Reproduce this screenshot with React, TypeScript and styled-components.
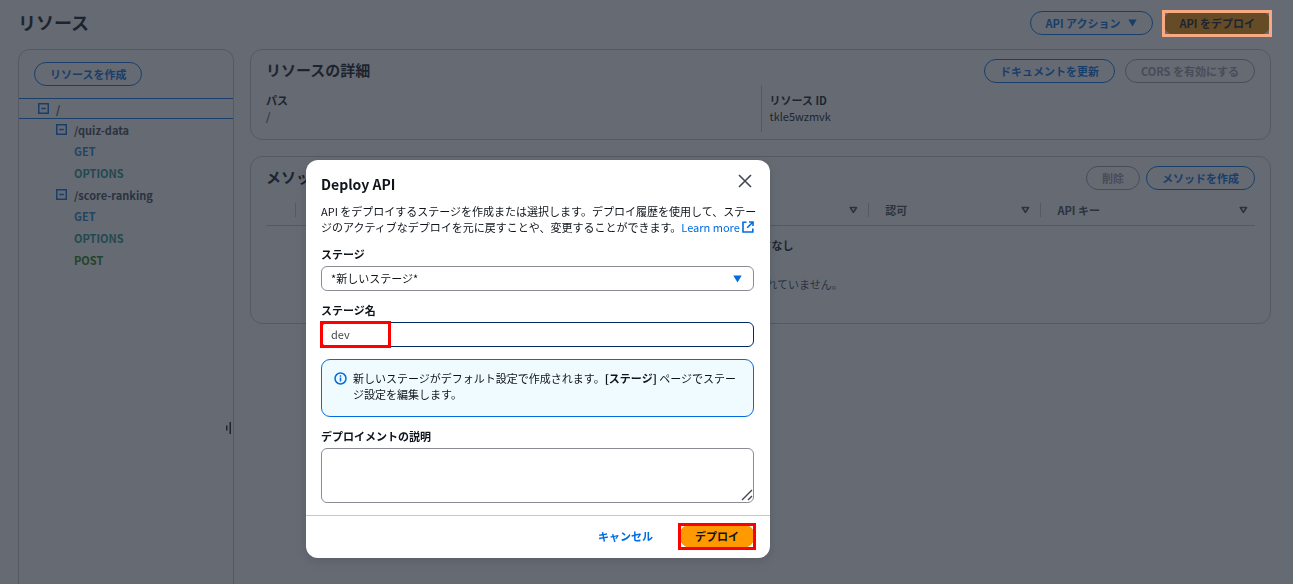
import React, { useState } from "react";
import styled, { createGlobalStyle, css } from "styled-components";

const color = {
  text: "#0f141a",
  muted: "#424650",
  link: "#006ce0",
  border: "#c6c6cd",
  field: "#8c8c94",
  disabled: "#9c9ca6",
  orange: "#ff9900",
};

const GlobalStyle = createGlobalStyle`
  *, *::before, *::after { box-sizing: border-box; }
  body { margin: 0; background: #fff; overflow: hidden; }
  body, button, input, select, textarea {
    font-family: "Noto Sans CJK JP", "Noto Sans", sans-serif;
    font-size: 11px;
    line-height: 16px;
    color: ${color.text};
  }
  h1, h2, p, ul, dl, dd { margin: 0; padding: 0; }
  ul { list-style: none; }
`;

const Page = styled.main`
  min-height: 100vh;
  display: flex;
  flex-direction: column;
  padding: 0 22px 0 18px;
`;

const PageHeader = styled.header`
  display: flex;
  align-items: center;
  justify-content: space-between;
  padding: 11px 0 14px;
`;

const PageTitle = styled.h1`
  font-size: 18px;
  line-height: 22px;
  padding-bottom: 2px;
`;

const Actions = styled.div<{ $gap: number }>`
  display: flex;
  align-items: center;
  gap: ${(p) => p.$gap}px;
`;

type Variant = "normal" | "primary" | "link";

const variants = {
  normal: css`
    border-color: ${color.link};
    color: ${color.link};
    background: #fff;
  `,
  primary: css`
    border-color: ${color.orange};
    color: ${color.text};
    background: ${color.orange};
  `,
  link: css`
    border-color: transparent;
    color: ${color.link};
    background: transparent;
  `,
};

const Button = styled.button<{ $variant?: Variant }>`
  display: inline-flex;
  align-items: center;
  gap: 8px;
  height: 24px;
  padding: 0 15px;
  border: 1px solid;
  border-radius: 12px;
  font-weight: 700;
  white-space: nowrap;
  cursor: pointer;
  ${(p) => variants[p.$variant ?? "normal"]}
  &:disabled {
    border-color: ${color.disabled};
    color: ${color.disabled};
    cursor: default;
  }
`;

const Marked = styled.span<{ $color: string }>`
  position: relative;
  display: inline-flex;
  &::after {
    content: "";
    position: absolute;
    inset: -1px -1px -2px;
    border: 3px solid ${(p) => p.$color};
    z-index: 20;
    pointer-events: none;
  }
`;

const Columns = styled.div`
  flex: 1;
  display: flex;
  gap: 16px;
`;

const Sidebar = styled.aside`
  position: relative;
  width: 216px;
  flex: none;
  border: 1px solid ${color.border};
  border-bottom: 0;
  border-radius: 12px 12px 0 0;
`;

const SidebarTop = styled.div`
  padding: 12px 15px;
  display: flex;
`;

const TreeRow = styled.div<{ $level: number; $selected?: boolean; $method?: boolean }>`
  display: flex;
  align-items: center;
  gap: 7px;
  height: ${(p) => (p.$method ? 22 : 21)}px;
  padding-left: ${(p) => 19 + p.$level * 18}px;
  font-weight: 700;
  color: ${color.muted};
  ${(p) =>
    p.$selected &&
    css`
      border-top: 1px solid ${color.link};
      border-bottom: 1px solid ${color.link};
    `}
`;

const Toggle = styled.button`
  display: flex;
  padding: 0;
  border: 0;
  background: none;
  color: ${color.link};
`;

const methodColor: Record<string, string> = {
  GET: "#1f83c4",
  OPTIONS: "#1c8f85",
  POST: "#1d8102",
};

const MethodLink = styled.a<{ $method: string }>`
  color: ${(p) => methodColor[p.$method]};
  text-decoration: none;
`;

const ResizeHandle = styled.svg`
  position: absolute;
  right: 1px;
  top: calc(50vh + 80px);
`;

const Content = styled.div`
  flex: 1;
  min-width: 0;
  display: flex;
  flex-direction: column;
  gap: 16px;
`;

const Card = styled.section`
  border: 1px solid ${color.border};
  border-radius: 12px;
  padding: 9px 15px 7px;
`;

const CardHeader = styled.div`
  display: flex;
  align-items: center;
  justify-content: space-between;
`;

const CardTitle = styled.h2`
  font-size: 15px;
  line-height: 22px;
  padding-bottom: 2px;
`;

const Details = styled.dl`
  display: grid;
  grid-template-columns: 1fr 1fr;
  margin-top: 2px;
`;

const Detail = styled.div<{ $divided?: boolean }>`
  padding: 7px 0 8px;
  ${(p) =>
    p.$divided &&
    css`
      border-left: 1px solid ${color.border};
      padding-left: 8px;
    `}
`;

const DetailName = styled.dt`
  font-weight: 700;
`;

const Table = styled.table`
  width: 100%;
  margin-top: 5px;
  border-collapse: collapse;
  table-layout: fixed;
`;

const HeadCell = styled.th`
  height: 30px;
  padding: 0;
  border-bottom: 1px solid ${color.border};
  color: ${color.muted};
  text-align: left;
`;

const HeadInner = styled.div<{ $last?: boolean }>`
  display: flex;
  align-items: center;
  justify-content: space-between;
  height: 14px;
  padding: 0 10px 0 16px;
  border-right: ${(p) => (p.$last ? "0" : `1px solid ${color.border}`)};
  ${(p) => p.$last && "padding-right: 7px;"}
`;

const EmptyCell = styled.td`
  padding: 11px 0 19px;
  text-align: center;
`;

const EmptyTitle = styled.p`
  font-weight: 700;
`;

const EmptyText = styled.p`
  padding: 23px 0 5px;
  color: ${color.muted};
`;

const Overlay = styled.div`
  position: fixed;
  inset: 0;
  z-index: 10;
  display: flex;
  justify-content: center;
  align-items: flex-start;
  padding: 160px 217px 0 0;
  background: rgba(35, 43, 55, 0.7);
`;

const Dialog = styled.div`
  width: 464px;
  background: #fff;
  border-radius: 12px;
  box-shadow: 0 3px 12px rgba(0, 7, 22, 0.12);
`;

const DialogHeader = styled.div`
  display: flex;
  justify-content: space-between;
  padding: 13px 18px 8px 15px;
`;

const DialogTitle = styled.h2`
  font-size: 14px;
  line-height: 22px;
`;

const CloseButton = styled.button`
  display: flex;
  padding: 0;
  border: 0;
  margin-top: 1px;
  height: 14px;
  background: none;
  color: ${color.muted};
`;

const Description = styled.p`
  padding: 0 8px 0 15px;
`;

const Link = styled.a`
  display: inline-flex;
  align-items: center;
  gap: 2px;
  color: ${color.link};
  text-decoration: none;
`;

const Form = styled.div`
  display: flex;
  flex-direction: column;
  gap: 11px;
  padding: 11px 16px 12px 15px;
`;

const Field = styled.div`
  display: flex;
  flex-direction: column;
  gap: 4px;
`;

const Label = styled.label`
  font-weight: 700;
`;

const Control = styled.div`
  position: relative;
  display: flex;
`;

const box = css`
  width: 100%;
  padding: 0 9px 1px;
  border: 1px solid ${color.field};
  border-radius: 6px;
  background: #fff;
  outline: 0;
  color: ${color.text};
`;

const Select = styled.select`
  ${box}
  height: 25px;
  appearance: none;
`;

const SelectArrow = styled.svg`
  position: absolute;
  right: 12px;
  top: 9px;
  pointer-events: none;
`;

const Input = styled.input`
  ${box}
  height: 25px;
  border-color: #002b66;
  color: ${color.muted};
`;

const InputMark = styled.span`
  position: absolute;
  left: -1px;
  top: -1px;
  bottom: -1px;
  width: 71px;
  border: 3px solid #ff0000;
  pointer-events: none;
`;

const TextArea = styled.textarea`
  ${box}
  height: 55px;
  resize: none;
`;

const Grip = styled.svg`
  position: absolute;
  right: 1px;
  bottom: 2px;
  pointer-events: none;
`;

const Info = styled.div`
  display: flex;
  gap: 6px;
  min-height: 58px;
  margin-top: 1px;
  padding: 10px 12px;
  border: 1px solid ${color.link};
  border-radius: 9px;
  background: #f0fbff;
  svg {
    flex: none;
    margin-top: 2px;
  }
`;

const DialogFooter = styled.div`
  display: flex;
  justify-content: flex-end;
  align-items: center;
  gap: 10px;
  padding: 8px 15px 10px;
  border-top: 1px solid ${color.border};
`;

const CollapseIcon = () => (
  <svg width="11" height="11" viewBox="0 0 11 11" fill="none" stroke="currentColor" aria-hidden="true">
    <rect x="0.75" y="0.75" width="9.5" height="9.5" strokeWidth="1.5" />
    <path d="M3.2 5.5h4.6" strokeWidth="1.5" />
  </svg>
);

const SortIcon = () => (
  <svg width="9" height="8" viewBox="0 0 9 8" fill="none" stroke="currentColor" strokeWidth="1.7" aria-hidden="true">
    <path d="M1.3 1.5h6.2L4.4 6.4z" strokeLinejoin="round" />
  </svg>
);

const CaretIcon = () => (
  <svg width="9" height="8" viewBox="0 0 9 8" fill="currentColor" aria-hidden="true">
    <path d="M0.3 0.5h8.4L4.5 7.5z" />
  </svg>
);

type Resource = { path: string; methods: string[] };

const resources: Resource[] = [
  { path: "/quiz-data", methods: ["GET", "OPTIONS"] },
  { path: "/score-ranking", methods: ["GET", "OPTIONS", "POST"] },
];

const columns = ["メソッドタイプ", "統合タイプ", "認可", "API キー"];

function ResourceTree() {
  return (
    <ul>
      <li>
        <TreeRow $level={0} $selected>
          <Toggle aria-label="折りたたむ"><CollapseIcon /></Toggle>/
        </TreeRow>
        <ul>
          {resources.map((r) => (
            <li key={r.path}>
              <TreeRow $level={1}>
                <Toggle aria-label="折りたたむ"><CollapseIcon /></Toggle>
                {r.path}
              </TreeRow>
              <ul>
                {r.methods.map((m) => (
                  <li key={m}>
                    <TreeRow $level={2} $method>
                      <MethodLink href="#" $method={m}>{m}</MethodLink>
                    </TreeRow>
                  </li>
                ))}
              </ul>
            </li>
          ))}
        </ul>
      </li>
    </ul>
  );
}

function DeployDialog() {
  const [name, setName] = useState("dev");
  const [note, setNote] = useState("");
  return (
    <Overlay>
      <Dialog role="dialog" aria-modal="true" aria-labelledby="deploy-title">
        <DialogHeader>
          <DialogTitle id="deploy-title">Deploy API</DialogTitle>
          <CloseButton aria-label="閉じる">
            <svg width="14" height="14" viewBox="0 0 14 14" fill="none" stroke="currentColor" strokeWidth="1.6">
              <path d="M1 1l12 12M13 1L1 13" />
            </svg>
          </CloseButton>
        </DialogHeader>
        <Description>
          API をデプロイするステージを作成または選択します。デプロイ履歴を使用して、ステージのアクティブなデプロイを元に戻すことや、変更することができます。
          <Link href="#">
            Learn more
            <svg width="12" height="12" viewBox="0 0 12 12" fill="none" stroke="currentColor" strokeWidth="1.6" aria-hidden="true">
              <path d="M4.5 1.2H1v9.8h9.8V7.5" />
              <path d="M7 1h4v4M11 1L5.2 6.8" />
            </svg>
          </Link>
        </Description>
        <Form>
          <Field>
            <Label htmlFor="stage">ステージ</Label>
            <Control>
              <Select id="stage">
                <option>*新しいステージ*</option>
              </Select>
              <SelectArrow width="9" height="8" viewBox="0 0 9 8" fill={color.link} aria-hidden="true">
                <path d="M0.3 0.5h8.4L4.5 7.5z" />
              </SelectArrow>
            </Control>
          </Field>
          <Field>
            <Label htmlFor="stage-name">ステージ名</Label>
            <Control>
              <Input id="stage-name" value={name} onChange={(e) => setName(e.target.value)} />
              <InputMark />
            </Control>
          </Field>
          <Info>
            <svg width="13" height="13" viewBox="0 0 13 13" fill="none" stroke={color.link} strokeWidth="1.5" aria-hidden="true">
              <circle cx="6.5" cy="6.5" r="5.5" />
              <path d="M6.5 5.6v4M6.5 3.3v1.4" />
            </svg>
            <p>
              新しいステージがデフォルト設定で作成されます。<b>[ステージ]</b> ページでステージ設定を編集します。
            </p>
          </Info>
          <Field>
            <Label htmlFor="note">デプロイメントの説明</Label>
            <Control>
              <TextArea id="note" value={note} onChange={(e) => setNote(e.target.value)} />
              <Grip width="12" height="12" viewBox="0 0 12 12" stroke={color.muted} strokeWidth="1.4" aria-hidden="true">
                <path d="M1 11L11 1M7 11l4-4" />
              </Grip>
            </Control>
          </Field>
        </Form>
        <DialogFooter>
          <Button $variant="link">キャンセル</Button>
          <Marked $color="#ff0000">
            <Button $variant="primary">デプロイ</Button>
          </Marked>
        </DialogFooter>
      </Dialog>
    </Overlay>
  );
}

export default function App() {
  return (
    <>
      <GlobalStyle />
      <Page>
        <PageHeader>
          <PageTitle>リソース</PageTitle>
          <Actions $gap={10}>
            <Button>API アクション <CaretIcon /></Button>
            <Marked $color="#f8a882">
              <Button $variant="primary">API をデプロイ</Button>
            </Marked>
          </Actions>
        </PageHeader>
        <Columns>
          <Sidebar>
            <SidebarTop>
              <Button>リソースを作成</Button>
            </SidebarTop>
            <ResourceTree />
            <ResizeHandle width="6" height="12" viewBox="0 0 6 12" fill={color.text} aria-hidden="true">
              <rect x="0" y="3.5" width="1.5" height="5" />
              <rect x="3.5" y="0" width="1.5" height="12" />
            </ResizeHandle>
          </Sidebar>
          <Content>
            <Card>
              <CardHeader>
                <CardTitle>リソースの詳細</CardTitle>
                <Actions $gap={10}>
                  <Button>ドキュメントを更新</Button>
                  <Button disabled>CORS を有効にする</Button>
                </Actions>
              </CardHeader>
              <Details>
                <Detail>
                  <DetailName>パス</DetailName>
                  <dd>/</dd>
                </Detail>
                <Detail $divided>
                  <DetailName>リソース ID</DetailName>
                  <dd>tkle5wzmvk</dd>
                </Detail>
              </Details>
            </Card>
            <Card>
              <CardHeader>
                <CardTitle>メソッド</CardTitle>
                <Actions $gap={6}>
                  <Button disabled>削除</Button>
                  <Button>メソッドを作成</Button>
                </Actions>
              </CardHeader>
              <Table>
                <colgroup>
                  <col style={{ width: "3%" }} />
                  <col />
                  <col />
                  <col style={{ width: "17.4%" }} />
                  <col style={{ width: "21.6%" }} />
                </colgroup>
                <thead>
                  <tr>
                    <HeadCell><HeadInner /></HeadCell>
                    {columns.map((c, i) => (
                      <HeadCell key={c} scope="col">
                        <HeadInner $last={i === columns.length - 1}>
                          {c}
                          <SortIcon />
                        </HeadInner>
                      </HeadCell>
                    ))}
                  </tr>
                </thead>
                <tbody>
                  <tr>
                    <EmptyCell colSpan={5}>
                      <EmptyTitle>メソッドなし</EmptyTitle>
                      <EmptyText>メソッドが定義されていません。</EmptyText>
                    </EmptyCell>
                  </tr>
                </tbody>
              </Table>
            </Card>
          </Content>
        </Columns>
      </Page>
      <DeployDialog />
    </>
  );
}
